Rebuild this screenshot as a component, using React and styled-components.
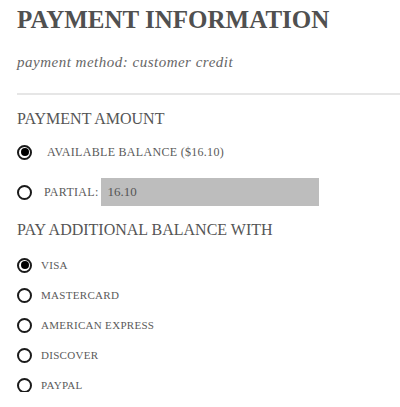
import styled, { createGlobalStyle } from 'styled-components';

const GlobalStyle = createGlobalStyle`
  body {
    margin: 0;
    background: #fff;
    font-family: "Liberation Serif", "DejaVu Serif", serif;
  }
`;

function Radio({ checked }) {
  return <RadioCircle>{checked && <RadioDot />}</RadioCircle>;
}

function App() {
  return (
    <Page>
      <GlobalStyle />
      <Title>PAYMENT INFORMATION</Title>
      <Method>payment method: customer credit</Method>
      <Divider />

      <SectionTitle>PAYMENT AMOUNT</SectionTitle>
      <AmountRow>
        <Radio checked />
        <AmountLabel $indent={15}>AVAILABLE BALANCE ($16.10)</AmountLabel>
      </AmountRow>
      <AmountRow>
        <Radio />
        <AmountLabel $indent={12}>PARTIAL:</AmountLabel>
        <AmountInput defaultValue="16.10" />
      </AmountRow>

      <SectionTitle>PAY ADDITIONAL BALANCE WITH</SectionTitle>
      <MethodList>
        {['VISA', 'MASTERCARD', 'AMERICAN EXPRESS', 'DISCOVER', 'PAYPAL'].map((name, i) => (
          <MethodRow key={name}>
            <Radio checked={i === 0} />
            <MethodLabel>{name}</MethodLabel>
          </MethodRow>
        ))}
      </MethodList>
    </Page>
  );
}
export default App;

export const Page = styled.div`
  padding: 5px 0 0 17px;
  width: 400px;
  box-sizing: border-box;
  color: #5a5a5a;
`;

export const Title = styled.h1`
  margin: 0;
  font-size: 25px;
  font-weight: 700;
  line-height: 30px;
  color: #505050;
`;

export const Method = styled.p`
  margin: 17px 0 0;
  font-size: 15px;
  font-style: italic;
  line-height: 20px;
  letter-spacing: 0.5px;
  color: #666;
`;

export const Divider = styled.hr`
  margin: 21px 0 0;
  border: 0;
  height: 2px;
  background: #e6e6e6;
`;

export const SectionTitle = styled.h2`
  margin: 13px 0 0;
  font-size: 16px;
  font-weight: 400;
  line-height: 22px;
  color: #555;
`;

export const AmountRow = styled.div`
  display: flex;
  align-items: center;
  height: 28px;
  margin-top: 8px;
  & + & {
    margin-top: 12px;
  }
`;

export const RadioCircle = styled.span`
  display: flex;
  align-items: center;
  justify-content: center;
  flex: 0 0 auto;
  width: 11px;
  height: 11px;
  border: 2px solid #1a1a1a;
  border-radius: 50%;
  background: #fff;
`;

export const RadioDot = styled.span`
  width: 8px;
  height: 8px;
  border-radius: 50%;
  background: #000;
`;

export const AmountLabel = styled.span`
  margin-left: ${({ $indent }) => $indent}px;
  font-size: 12px;
  letter-spacing: 0.3px;
  color: #5a5a5a;
`;

export const AmountInput = styled.input`
  margin-left: 2px;
  width: 218px;
  height: 28px;
  box-sizing: border-box;
  border: 0;
  padding: 0 7px;
  background: #bdbdbd;
  font-family: inherit;
  font-size: 13px;
  font-weight: 400;
  color: #555;
  outline: none;
`;

export const MethodList = styled.div`
  display: flex;
  flex-direction: column;
  gap: 16px;
  margin-top: 17px;
`;

export const MethodRow = styled.div`
  display: flex;
  align-items: center;
  height: 14px;
`;

export const MethodLabel = styled.span`
  margin-left: 9px;
  font-size: 11px;
  letter-spacing: 0.3px;
  color: #5a5a5a;
`;
